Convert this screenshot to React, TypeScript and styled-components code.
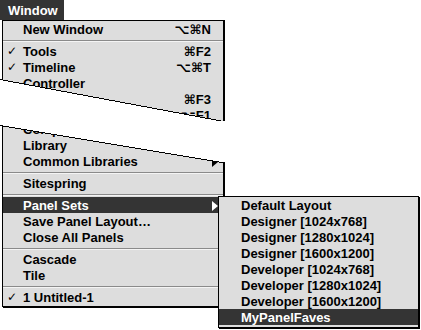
import styled, { createGlobalStyle } from 'styled-components';

const MENU_BG = '#dddddd';
const HILITE = '#343434';

const GlobalStyle = createGlobalStyle`
  html, body {
    margin: 0;
    padding: 0;
    background: #fff;
  }
  body {
    font-family: 'Liberation Sans', 'DejaVu Sans', Arial, sans-serif;
    font-weight: 700;
    font-size: 13px;
    color: #000;
  }
`;

const Screen = styled.div`
  width: 421px;
  height: 330px;
  overflow: hidden;
  display: flex;
  flex-direction: column;
  align-items: flex-start;
`;

const MenuTitle = styled.div`
  height: 20px;
  box-sizing: border-box;
  padding: 2px 6px 0 8px;
  line-height: 18px;
  background: ${HILITE};
  color: #fff;
`;

const TornPiece = styled.div`
  position: relative;
  margin-left: 2px;
`;

const MenuPanel = styled.div<{ $edge: 'upper' | 'lower' }>`
  width: 220px;
  background: ${MENU_BG};
  border: 1px solid #000;
  ${(p) =>
    p.$edge === 'upper'
      ? `
    height: 100px;
    border-bottom: none;
    overflow: hidden;
    box-shadow: 1px 0 0 #000;
  `
      : `
    border-top: none;
    padding-bottom: 1px;
    box-shadow: 1px 1px 0 #000;
  `}
`;

const MenuItem = styled.div<{ $active?: boolean }>`
  position: relative;
  display: flex;
  align-items: flex-start;
  height: 16px;
  box-sizing: border-box;
  padding: 1px 5px 0 0;
  line-height: 15px;
  white-space: nowrap;
  background: ${(p) => (p.$active ? HILITE : 'transparent')};
  color: ${(p) => (p.$active ? '#fff' : '#000')};
`;

const Check = styled.span`
  width: 20px;
  flex: none;
  box-sizing: border-box;
  padding-left: 4px;
  font-family: 'DejaVu Sans', sans-serif;
  font-size: 12px;
`;

const Label = styled.span`
  flex: none;
`;

const Shortcut = styled.span`
  margin-left: auto;
  padding-right: 7px;
`;

const SubArrow = styled.span<{ $light?: boolean }>`
  margin: 3px 0 0 auto;
  width: 0;
  height: 0;
  border-top: 5.5px solid transparent;
  border-bottom: 5.5px solid transparent;
  border-left: 6px solid ${(p) => (p.$light ? '#fff' : '#000')};
`;

const Separator = styled.div`
  height: 6px;
  box-sizing: border-box;
  padding-top: 3px;

  &::before {
    content: '';
    display: block;
    height: 1px;
    background: #8a8a8a;
    border-bottom: 1px solid #f4f4f4;
  }
`;

const Submenu = styled.div`
  position: absolute;
  left: 215px;
  top: -1px;
  z-index: 2;
  width: 199px;
  padding-bottom: 2px;
  background: ${MENU_BG};
  border: 1px solid #000;
  box-shadow: 1px 1px 0 #000;
`;

const SubItem = styled.div<{ $active?: boolean }>`
  height: 16px;
  box-sizing: border-box;
  padding: 1px 0 0 22px;
  line-height: 15px;
  white-space: nowrap;
  background: ${(p) => (p.$active ? HILITE : 'transparent')};
  color: ${(p) => (p.$active ? '#fff' : '#000')};
`;

const TearEdge = styled.svg`
  position: absolute;
  left: -2px;
  top: 0;
  overflow: visible;
  pointer-events: none;
`;

type Entry =
  | { sep: true }
  | {
      sep?: false;
      label: string;
      checked?: boolean;
      keys?: string;
      sub?: boolean;
      active?: boolean;
    };

const upperItems: Entry[] = [
  { label: 'New Window', keys: '⌥⌘N' },
  { sep: true },
  { label: 'Tools', checked: true, keys: '⌘F2' },
  { label: 'Timeline', checked: true, keys: '⌥⌘T' },
  { label: 'Controller' },
  { label: 'Properties', keys: '⌘F3' },
  { label: 'Answers', keys: '⌥F1' },
];

const lowerItems: Entry[] = [
  { label: 'Component Parameters', keys: '⌥F7' },
  { label: 'Library', keys: 'F11' },
  { label: 'Common Libraries', sub: true },
  { sep: true },
  { label: 'Sitespring' },
  { sep: true },
  { label: 'Panel Sets', sub: true, active: true },
  { label: 'Save Panel Layout…' },
  { label: 'Close All Panels' },
  { sep: true },
  { label: 'Cascade' },
  { label: 'Tile' },
  { sep: true },
  { label: '1 Untitled-1', checked: true },
];

const panelSets = [
  'Default Layout',
  'Designer [1024x768]',
  'Designer [1280x1024]',
  'Designer [1600x1200]',
  'Developer [1024x768]',
  'Developer [1280x1024]',
  'Developer [1600x1200]',
  'MyPanelFaves',
];

const renderItems = (items: Entry[]) =>
  items.map((item, i) => {
    if (item.sep) return <Separator key={i} />;
    return (
      <MenuItem key={i} $active={item.active}>
        <Check>{item.checked ? '✓' : ''}</Check>
        <Label>{item.label}</Label>
        {item.keys && <Shortcut>{item.keys}</Shortcut>}
        {item.sub && <SubArrow $light={item.active} />}
        {item.active && (
          <Submenu>
            {panelSets.map((name) => (
              <SubItem key={name} $active={name === 'MyPanelFaves'}>
                {name}
              </SubItem>
            ))}
          </Submenu>
        )}
      </MenuItem>
    );
  });

export default function App() {
  return (
    <>
      <GlobalStyle />
      <Screen>
        <MenuTitle>Window</MenuTitle>

        <TornPiece>
          <MenuPanel $edge="upper">{renderItems(upperItems)}</MenuPanel>
          <TearEdge width={228} height={101}>
            <polygon
              points="0,59 228,101.8 228,104 0,104"
              fill="#fff"
              shapeRendering="crispEdges"
            />
            <line
              x1={0}
              y1={59.5}
              x2={225}
              y2={101.7}
              stroke="#000"
              strokeWidth={1}
              shapeRendering="crispEdges"
            />
          </TearEdge>
        </TornPiece>

        <TornPiece>
          <MenuPanel $edge="lower">{renderItems(lowerItems)}</MenuPanel>
          <TearEdge width={228} height={44}>
            <polygon
              points="0,0 228,0 228,42.5 0,4.5"
              fill="#fff"
              shapeRendering="crispEdges"
            />
            <line
              x1={0}
              y1={4.5}
              x2={225}
              y2={42}
              stroke="#000"
              strokeWidth={1}
              shapeRendering="crispEdges"
            />
          </TearEdge>
        </TornPiece>
      </Screen>
    </>
  );
}
